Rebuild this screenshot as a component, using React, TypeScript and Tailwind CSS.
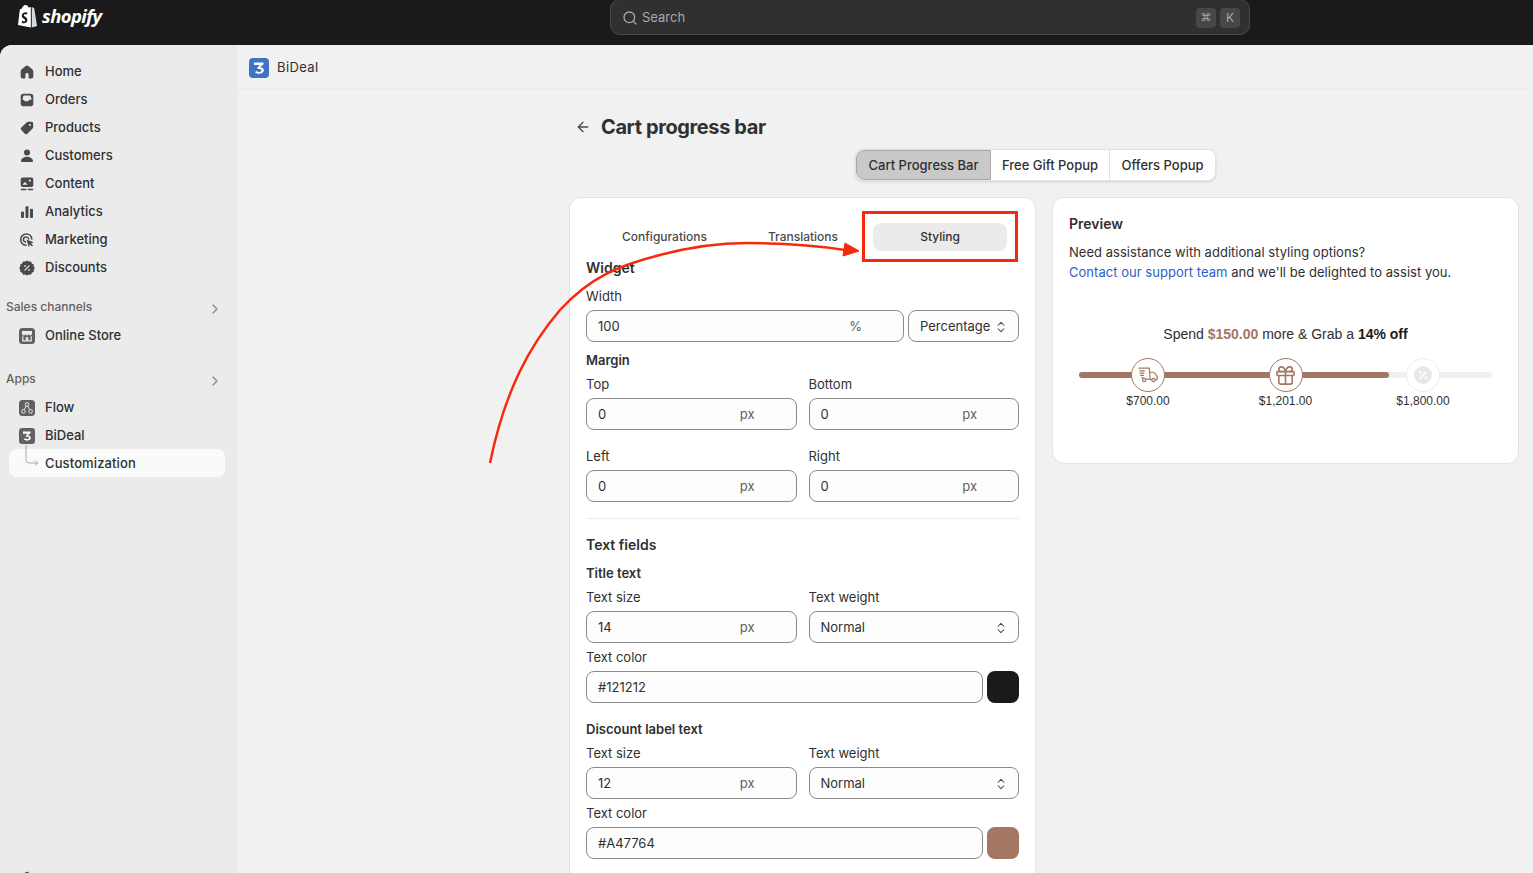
import React from 'react'
import { Search, ChevronRight, ArrowLeft, ChevronsUpDown, Gift, Settings } from 'lucide-react'

const FONT = "font-['Inter','Noto_Sans',sans-serif]"

function HomeIcon() {
  return <svg viewBox="0 0 16 16" className="w-4 h-4 fill-[#4a4a4a]"><path d="M8 1.600c-.5 0-1 .2-1.400.5L2.500 5.600C2 6 1.700 6.600 1.700 7.300V12.500c0 1.100.9 2 2 2h1.800c.5 0 .9-.4.9-.9V10.500c0-.9.7-1.600 1.600-1.600s1.600.7 1.600 1.600v3.100c0 .5.4.9.9.9h1.800c1.100 0 2-.9 2-2V7.300c0-.7-.3-1.300-.8-1.700L9.400 2.100C9 1.800 8.500 1.600 8 1.600z" /></svg>
}
function OrdersIcon() {
  return <svg viewBox="0 0 16 16" className="w-4 h-4"><rect x="1.700" y="1.800" width="12.600" height="12.400" rx="2.800" fill="#4a4a4a" /><path d="M3.400 7.800 4.100 4.800c.1-.8.7-1.300 1.400-1.300h5c.7 0 1.300.5 1.400 1.300l.7 3h-1.900c-.5 0-.8.300-1 .7-.1.500-.5.800-1 .8H6.300c-.5 0-.9-.3-1-.8-.2-.4-.5-.7-1-.7z" fill="#ebebeb" /></svg>
}
function ProductsIcon() {
  return <svg viewBox="0 0 16 16" className="w-4 h-4"><path d="M9 1.800h3.500c.9 0 1.700.8 1.700 1.700V7c0 .5-.2 1-.6 1.400l-5.300 5.300c-.7.7-1.700.7-2.400 0L2.300 10c-.7-.7-.7-1.700 0-2.400l5.300-5.200c.4-.4.9-.6 1.400-.6z" fill="#4a4a4a" /><circle cx="10.900" cy="5.100" r="1" fill="#ebebeb" /></svg>
}
function CustomersIcon() {
  return <svg viewBox="0 0 16 16" className="w-4 h-4 fill-[#4a4a4a]"><circle cx="8" cy="4.600" r="3" /><path d="M8 8.800c-3.200 0-5.600 1.700-6 3.900-.1.700.4 1.300 1.100 1.300h9.800c.7 0 1.200-.6 1.100-1.300C13.600 10.500 11.200 8.800 8 8.800z" /></svg>
}
function ContentIcon() {
  return <svg viewBox="0 0 16 16" className="w-4 h-4"><rect x="1.700" y="1.500" width="12.600" height="9.500" rx="2" fill="#4a4a4a" /><circle cx="10.800" cy="4.600" r="1.100" fill="#ebebeb" /><path d="M3.300 8.800 6 6l2.600 2.800z" fill="#ebebeb" /><rect x="1.700" y="12.800" width="5.800" height="1.400" rx=".7" fill="#4a4a4a" /><rect x="8.500" y="12.800" width="5.800" height="1.400" rx=".7" fill="#4a4a4a" /></svg>
}
function AnalyticsIcon() {
  return <svg viewBox="0 0 16 16" className="w-4 h-4 fill-[#4a4a4a]"><rect x="2" y="7.500" width="3" height="6.500" rx="1" /><rect x="6.500" y="2.200" width="3" height="11.800" rx="1" /><rect x="11" y="4.800" width="3" height="9.200" rx="1" /></svg>
}
function MarketingIcon() {
  return <svg viewBox="0 0 16 16" className="w-4 h-4 fill-none"><path d="M7 13.200C3.800 13 1.700 10.500 1.700 7.600 1.700 4.500 4.200 2 7.300 2c2.900 0 5.300 2.200 5.500 5" stroke="#4a4a4a" strokeWidth="1.600" strokeLinecap="round" /><path d="M6.600 10C5.200 9.800 4.400 8.800 4.400 7.600c0-1.500 1.300-2.700 2.800-2.700 1.200 0 2.300.8 2.600 2" stroke="#4a4a4a" strokeWidth="1.500" strokeLinecap="round" /><path d="m7.400 7.400 7.400 2.800-2.800 1.100 2 2-1.100 1.100-2-2-1.100 2.800z" fill="#4a4a4a" /></svg>
}
function DiscountsIcon() {
  return <svg viewBox="0 0 16 16" className="w-4 h-4"><path d="M8 .8l1.800 1.200 2.100-.1 1 1.900 1.900 1-.1 2.100L15.900 8.600l-1.200 1.500.1 2.100-1.900 1-1 1.900-2.100-.1L8 16l-1.800-1-2.100.1-1-1.900-1.900-1 .1-2.100L.1 8.600l1.200-1.700-.1-2.100 1.900-1 1-1.900 2.100.1z" transform="translate(0 -.4)" fill="#4a4a4a" /><path d="m5.900 10.100 4.200-4.200" stroke="#ebebeb" strokeWidth="1.200" strokeLinecap="round" /><circle cx="6" cy="6.100" r=".9" fill="#ebebeb" /><circle cx="10" cy="9.900" r=".9" fill="#ebebeb" /></svg>
}
function StoreIcon() {
  return <svg viewBox="0 0 16 16" className="w-4 h-4"><rect x="0" y="0" width="16" height="16" rx="3.500" fill="#616161" /><path d="M3 3h10v2.800a1.600 1.600 0 0 1-3.300 0 1.700 1.700 0 0 1-3.400 0A1.600 1.600 0 0 1 3 5.800z" fill="#ebebeb" /><path d="M3.800 8.200v4.700h8.400V8.200" fill="none" stroke="#ebebeb" strokeWidth="1.200" /><rect x="6.700" y="9.200" width="2.600" height="3.700" fill="#ebebeb" /></svg>
}
function FlowIcon() {
  return <svg viewBox="0 0 16 16" className="w-4 h-4 fill-none stroke-[#ebebeb]" strokeWidth="1"><rect x="0" y="0" width="16" height="16" rx="3.500" fill="#616161" stroke="none" /><circle cx="8" cy="4.400" r="1.800" /><circle cx="4.400" cy="11.400" r="1.800" /><circle cx="11.600" cy="11.400" r="1.800" /><path d="M7.200 6.100 5.200 9.700M8.800 6.100l2 3.600" /></svg>
}
function BiDealLogo({ bg, size }: { bg: string; size: string }) {
  return (
    <svg viewBox="0 0 20 20" className={size}>
      <rect width="20" height="20" rx="4" fill={bg} />
      <path d="M5 4.500h9.500v1.800L11 9.300c2.200 0 3.800 1.200 3.800 3 0 2.200-2 3.500-4.500 3.500-1.500 0-3-.4-4.300-1.300l1.100-1.600c1 .6 2.100 1 3.100 1 1.200 0 2.200-.6 2.200-1.500 0-1-1.200-1.500-3.600-1.300l-.4-1.500 2.600-2.500H5z" fill="#fff" />
    </svg>
  )
}

function TruckIcon() {
  return (
    <svg viewBox="0 0 24 24" className="w-[22px] h-[22px] fill-none stroke-[#a47764]" strokeWidth="1.300" strokeLinecap="round" strokeLinejoin="round">
      <path d="M2 4.500h11.500l.8 12H9.500" />
      <path d="M3 7.500h5M3.500 10h4M4 12.500h3M5 15h2" />
      <path d="M14.200 9h4.300l3.500 4.500v3.500h-1.800" />
      <path d="M14.500 17h1.500" />
      <circle cx="7.800" cy="17.500" r="1.800" />
      <circle cx="18" cy="17.500" r="1.800" />
    </svg>
  )
}

function PercentIcon() {
  return (
    <svg viewBox="0 0 20 20" className="w-5 h-5">
      <circle cx="10" cy="10" r="9" fill="#e8e8e8" />
      <path d="m6.800 13.200 6.400-6.400" stroke="#fff" strokeWidth="1.500" strokeLinecap="round" />
      <circle cx="7" cy="7" r="1.300" fill="#fff" />
      <circle cx="13" cy="13" r="1.300" fill="#fff" />
    </svg>
  )
}

function NavItem({ icon, label }: { icon: React.ReactNode; label?: string }) {
  return (
    <div className="flex items-center h-7 pl-[19px] gap-[10px] text-[13px] font-[450] text-[#303030]">
      <span className="w-4 h-4 flex items-center justify-center">{icon}</span>
      {label && <span>{label}</span>}
    </div>
  )
}

function SectionHead({ label }: { label: string }) {
  return (
    <div className="flex items-center justify-between h-[27px] pl-[6px] pr-[13px] text-xs font-medium text-[#616161]">
      <span className="-mt-[4px]">{label}</span>
      <ChevronRight className="w-4 h-4 text-[#8a8a8a]" />
    </div>
  )
}

function Label({ children, strong, big }: { children: React.ReactNode; strong?: boolean; big?: boolean }) {
  return <div className={`h-5 leading-5 text-[#303030] ${big ? 'text-sm' : 'text-[13px]'} ${strong ? 'font-semibold' : ''}`}>{children}</div>
}

function Input({ value, suffix, className }: { value: string; suffix?: string; className?: string }) {
  return (
    <div className={`flex items-center justify-between h-8 pl-[11px] pr-[41px] pt-[1px] mt-1 rounded-lg border border-[#8a8a8a] bg-[#fdfdfd] text-[13px] text-[#303030] ${className || ''}`}>
      <span>{value}</span>
      {suffix && <span className="text-[#616161]">{suffix}</span>}
    </div>
  )
}

function Select({ value, className }: { value: string; className?: string }) {
  return (
    <div className={`flex items-center justify-between h-8 pl-[11px] pr-[10px] pt-[1px] mt-1 rounded-lg border border-[#8a8a8a] bg-[#fdfdfd] text-[13px] text-[#303030] ${className || ''}`}>
      <span>{value}</span>
      <ChevronsUpDown className="w-[14px] h-[14px] text-[#4a4a4a]" strokeWidth={1.75} />
    </div>
  )
}

function ColorRow({ value, swatch }: { value: string; swatch: string }) {
  return (
    <div className="flex gap-1">
      <Input value={value} className="flex-1" />
      <div className={`w-8 h-8 mt-1 rounded-lg ${swatch}`} />
    </div>
  )
}

function Step({ icon, label, muted }: { icon: React.ReactNode; label: string; muted?: boolean }) {
  return (
    <div className="w-[100px] flex flex-col items-center">
      <div className={`w-[34px] h-[34px] rounded-full bg-white flex items-center justify-center border ${muted ? 'border-[#ececec]' : 'border-[#a47764]'}`}>
        {icon}
      </div>
      <div className="mt-[2px] text-xs leading-[14px] text-[#303030] font-['Liberation_Sans',sans-serif]">{label}</div>
    </div>
  )
}

export default function App() {
  return (
    <div className={`relative w-[1533px] h-[873px] overflow-hidden bg-[#1a1a1a] ${FONT}`}>
      {/* top bar */}
      <div className="relative h-[45px] flex items-start">
        <div className="flex items-center gap-[4px] pl-[17px] pt-[4px] text-white">
          <svg viewBox="0 0 22 25" className="w-[21px] h-[24px]">
            <path d="M3 5.500 1 22l13.500 2.500V3L12 3.500C11.400 1.800 10.300 1 9.100 1 7 1 5.500 3 4.900 5z" fill="#fff" />
            <path d="M15.500 3v21.500L21 23 18 4.500z" fill="#d8d8d8" />
            <path d="M11 9.200 10.400 11c-1.900-.8-3.300-.2-3.300.8 0 1.500 3.800 1.800 3.800 5 0 3.400-4.100 4.200-6 2.700l.6-1.900c1.200.9 3.100 1.100 3.100-.5 0-1.700-3.600-1.800-3.600-4.900 0-3 3.500-4.600 6-3z" fill="#1a1a1a" />
          </svg>
          <span className="font-['Open_Sans',sans-serif] text-[18.5px] leading-6 font-bold italic tracking-[-0.6px]">shopify</span>
        </div>
        <div className="absolute left-[610px] -top-[1px] w-[640px] h-9 pt-[1px] rounded-[10px] border border-[#4a4a4a] bg-[#303030] flex items-center pl-[11px] pr-[9px] text-[13px] text-[#a8a8a8]">
          <Search className="w-4 h-4 mr-[4px]" />
          <span className="flex-1">Search</span>
          <span className="w-5 h-5 mr-[4px] rounded bg-[#474747] flex items-center justify-center text-[11px]">⌘</span>
          <span className="w-5 h-5 rounded bg-[#474747] flex items-center justify-center text-[12px]">K</span>
        </div>
      </div>

      <div className="flex h-[828px] rounded-tl-xl overflow-hidden bg-[#f1f1f1]">
        {/* sidebar */}
        <aside className="w-[237px] shrink-0 overflow-hidden bg-[#ebebeb] border-r border-[#e6e6e6] pt-[13px]">
          <NavItem icon={<HomeIcon />} label="Home" />
          <NavItem icon={<OrdersIcon />} label="Orders" />
          <NavItem icon={<ProductsIcon />} label="Products" />
          <NavItem icon={<CustomersIcon />} label="Customers" />
          <NavItem icon={<ContentIcon />} label="Content" />
          <NavItem icon={<AnalyticsIcon />} label="Analytics" />
          <NavItem icon={<MarketingIcon />} label="Marketing" />
          <NavItem icon={<DiscountsIcon />} label="Discounts" />
          <div className="h-[13px]" />
          <SectionHead label="Sales channels" />
          <NavItem icon={<StoreIcon />} label="Online Store" />
          <div className="h-[17px]" />
          <SectionHead label="Apps" />
          <NavItem icon={<FlowIcon />} label="Flow" />
          <NavItem icon={<BiDealLogo bg="#616161" size="w-4 h-4" />} label="BiDeal" />
          <div className="relative flex items-center h-7 -mt-px pt-[1px] ml-[9px] mr-[11px] pl-[36px] rounded-lg bg-[#fafafa] text-[13px] font-[550] tracking-[0.12px] text-[#303030]">
            <svg viewBox="0 0 14 24" className="absolute left-[16px] -top-[4px] w-[14px] h-6 fill-none stroke-[#a8a8a8]" strokeWidth="1">
              <path d="M1 0v15a3 3 0 0 0 3 3h8.500M10 15.500l2.500 2.500-2.500 2.500" />
            </svg>
            Customization
          </div>
          <div className="h-[388px]" />
          {/* settings row, only the top of its icon is on screen */}
          <NavItem icon={<Settings className="w-4 h-4 fill-[#4a4a4a] text-[#4a4a4a]" />} />
        </aside>

        <main className="flex-1 min-w-0">
          {/* app title bar */}
          <div className="h-[44px] flex items-center gap-[8px] pl-[12px] pt-[2px] border-b border-[#ebebeb] text-[13px] text-[#303030]">
            <BiDealLogo bg="#3f74c5" size="w-5 h-5" />
            <span className="tracking-[0.4px]">BiDeal</span>
          </div>

          <div className="pl-[332px]">
            <div className="flex items-center h-7 mt-[24px] gap-[10px]">
              <ArrowLeft className="w-4 h-4 ml-[6px] text-[#4a4a4a]" />
              <h1 className="text-xl font-bold tracking-[-0.4px] text-[#303030]">Cart progress bar</h1>
            </div>

            <div className="flex mt-[8px] ml-[286px] w-[361px] h-8 rounded-lg bg-white border border-[#e3e3e3] shadow-sm text-[13px] font-[450] text-[#303030] overflow-hidden">
              <div className="w-[135px] pt-[1px] flex items-center justify-center bg-[#c9c9c9] border border-[#a8a8a8] rounded-l-lg">Cart Progress Bar</div>
              <div className="w-[119px] pt-[1px] flex items-center justify-center border-r border-[#e3e3e3]">Free Gift Popup</div>
              <div className="flex-1 pt-[1px] flex items-center justify-center">Offers Popup</div>
            </div>

            <div className="flex items-start gap-4 mt-[16px]">
              {/* settings card */}
              <section className="w-[467px] h-[720px] shrink-0 rounded-t-xl border border-[#e3e3e3] bg-white px-4 pt-[25px]">
                <div className="flex h-7 text-xs font-[450] text-[#4a4a4a]">
                  <div className="w-[158px] pl-[36px] flex items-center">Configurations</div>
                  <div className="w-[129px] flex items-center justify-center pr-[11px]">Translations</div>
                  <div className="w-[134px] flex items-center justify-center rounded-lg bg-[#ebebeb] text-[#303030]">Styling</div>
                </div>

                <div className="mt-[7px]"><Label strong big>Widget</Label></div>
                <div className="mt-2"><Label>Width</Label></div>
                <div className="flex gap-1">
                  <Input value="100" suffix="%" className="flex-1" />
                  <Select value="Percentage" className="w-[111px]" />
                </div>

                <div className="mt-2"><Label strong>Margin</Label></div>
                <div className="grid grid-cols-2 gap-x-3 mt-1">
                  <div><Label>Top</Label><Input value="0" suffix="px" /></div>
                  <div><Label>Bottom</Label><Input value="0" suffix="px" /></div>
                </div>
                <div className="grid grid-cols-2 gap-x-3 mt-4">
                  <div><Label>Left</Label><Input value="0" suffix="px" /></div>
                  <div><Label>Right</Label><Input value="0" suffix="px" /></div>
                </div>

                <div className="h-px bg-[#ebebeb] mt-4" />

                <div className="mt-4"><Label strong big>Text fields</Label></div>
                <div className="mt-2"><Label strong>Title text</Label></div>
                <div className="grid grid-cols-2 gap-x-3 mt-1">
                  <div><Label>Text size</Label><Input value="14" suffix="px" /></div>
                  <div><Label>Text weight</Label><Select value="Normal" /></div>
                </div>
                <div className="mt-1"><Label>Text color</Label></div>
                <ColorRow value="#121212" swatch="bg-[#1a1a1a]" />

                <div className="mt-4"><Label strong>Discount label text</Label></div>
                <div className="grid grid-cols-2 gap-x-3 mt-1">
                  <div><Label>Text size</Label><Input value="12" suffix="px" /></div>
                  <div><Label>Text weight</Label><Select value="Normal" /></div>
                </div>
                <div className="mt-1"><Label>Text color</Label></div>
                <ColorRow value="#A47764" swatch="bg-[#a47764]" />
              </section>

              {/* preview card */}
              <section className="w-[467px] h-[267px] shrink-0 rounded-xl border border-[#e3e3e3] bg-white px-4 pt-4">
                <div className="h-5 leading-5 text-sm font-semibold text-[#303030]">Preview</div>
                <p className="mt-[8px] text-[13px] leading-5 tracking-[0.03px] text-[#303030]">
                  Need assistance with additional styling options?
                  <br />
                  <span className="text-[#2a62c9]">Contact our support team</span> and we'll be delighted to assist you.
                </p>
                <div className="mt-[42px] text-center text-sm leading-5 text-[#303030] font-['Liberation_Sans',sans-serif]">
                  Spend <span className="font-bold text-[#a47764]">$150.00</span> more &amp; Grab a <b className="text-[#1a1a1a]">14% off</b>
                </div>
                <div className="relative mt-[14px] mx-[10px] h-[50px]">
                  <div className="absolute left-0 right-0 top-[14px] h-[6px] rounded-full bg-[#efefef]" />
                  <div className="absolute left-0 w-[310px] top-[14px] h-[6px] rounded-full bg-[#a47764]" />
                  <div className="relative flex justify-between px-[19px]">
                    <Step icon={<TruckIcon />} label="$700.00" />
                    <Step icon={<Gift className="w-[23px] h-[23px] text-[#a47764]" strokeWidth={1.7} />} label="$1,201.00" />
                    <Step muted icon={<PercentIcon />} label="$1,800.00" />
                  </div>
                </div>
              </section>
            </div>
          </div>
        </main>
      </div>

      {/* annotation drawn over the page */}
      <div className="absolute left-[862px] top-[211px] w-[156px] h-[51px] border-[3px] border-[#f52a0c]" />
      <svg className="absolute left-0 top-0 w-[1533px] h-[873px] pointer-events-none" viewBox="0 0 1533 873">
        <path d="M490 463C505 390 530 345 560 310 590 277 620 265 660 255 690 247 720 243 747 243 780 243 815 245 845 250" fill="none" stroke="#f52a0c" strokeWidth="2.500" />
        <path d="m859 251-16 5 2-13z" fill="#f52a0c" stroke="#f52a0c" strokeWidth="1" />
      </svg>
    </div>
  )
}
